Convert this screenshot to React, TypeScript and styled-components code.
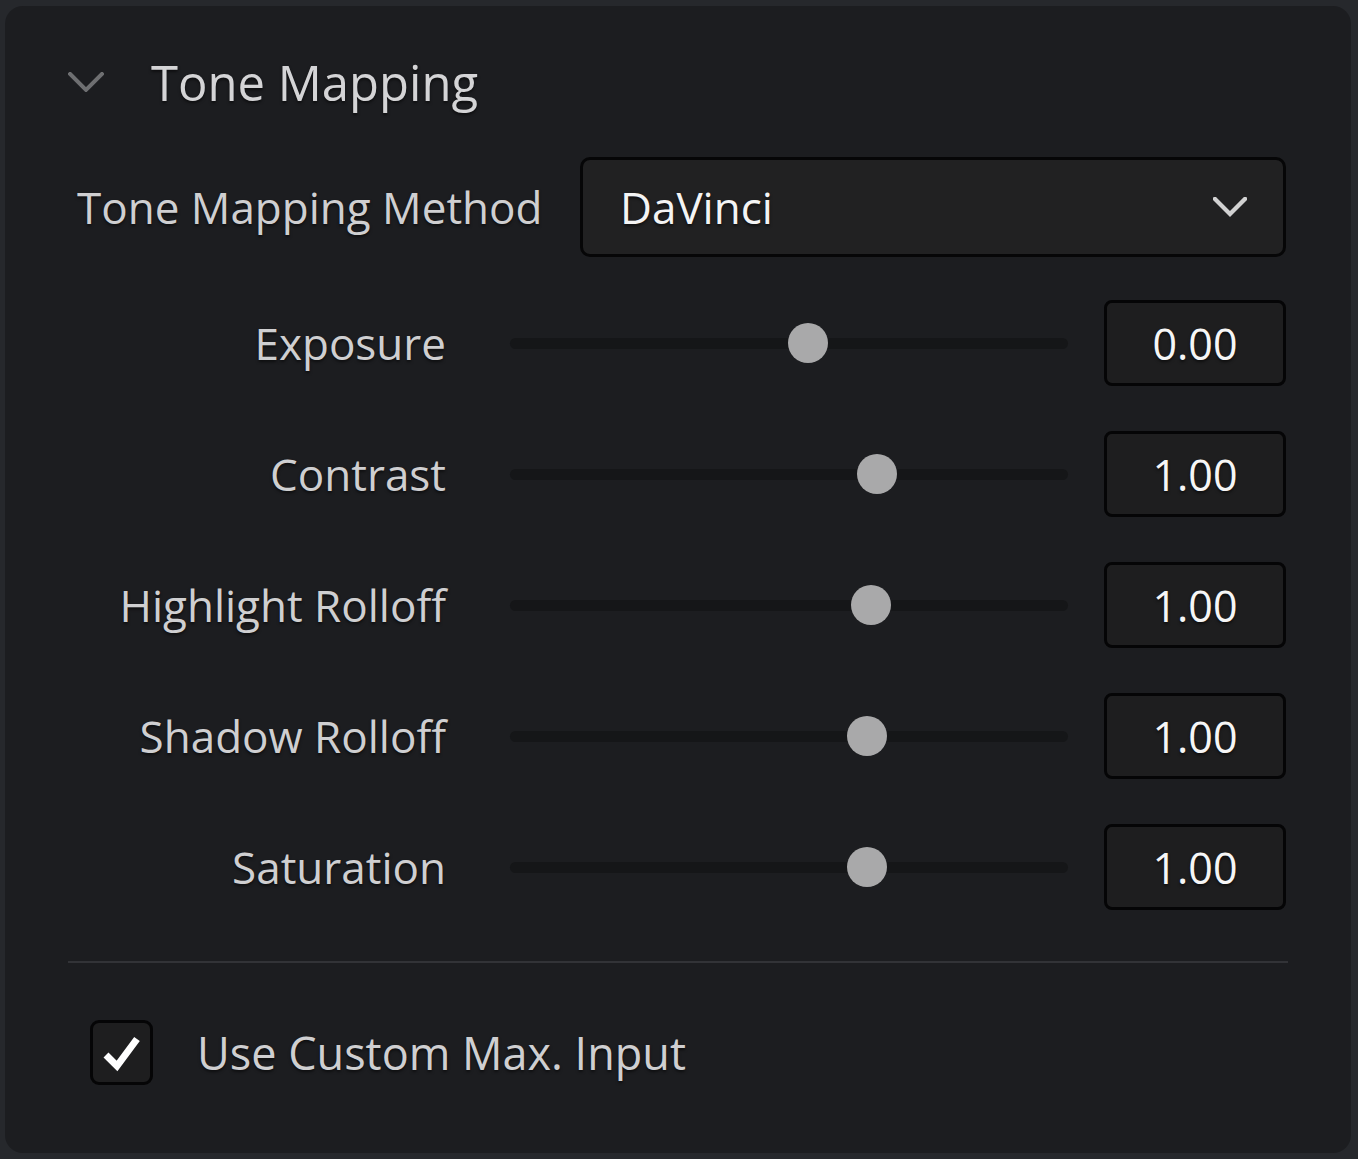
import styled, { createGlobalStyle } from 'styled-components';

const GlobalStyle = createGlobalStyle`
  html, body {
    margin: 0;
    padding: 0;
    background: #26282c;
  }
  body {
    font-family: 'Open Sans', 'Noto Sans', sans-serif;
  }
`;

const Panel = styled.div`
  box-sizing: border-box;
  width: 1346px;
  height: 1147px;
  margin: 6px 0 0 5px;
  padding: 44px 63px 0 63px;
  background: #1c1d20;
  border-radius: 18px;
  display: flex;
  flex-direction: column;
  text-shadow: 0 2px 3px rgba(0, 0, 0, 0.55);
`;

const Header = styled.div`
  height: 64px;
  display: flex;
  align-items: center;
  gap: 47px;
`;

const Title = styled.span`
  font-size: 49px;
  color: #d4d4d6;
`;

const MethodRow = styled.div`
  margin-top: 43px;
  height: 100px;
  display: flex;
  align-items: center;
  justify-content: space-between;
  padding-left: 9px;
  padding-right: 2px;
`;

const Label = styled.span`
  font-size: 44px;
  color: #cfcfd1;
  white-space: nowrap;
`;

const Select = styled.div`
  box-sizing: border-box;
  width: 706px;
  height: 100px;
  border: 3px solid #060607;
  border-radius: 10px;
  background: #212122;
  display: flex;
  align-items: center;
  justify-content: space-between;
  padding: 0 36px 0 37px;
  font-size: 44px;
  color: #f4f4f4;
`;

const SliderList = styled.div`
  margin-top: 43px;
  display: flex;
  flex-direction: column;
  gap: 45px;
`;

const SliderRow = styled.div`
  display: flex;
  align-items: center;
  height: 86px;
`;

const RowLabel = styled(Label)`
  width: 378px;
  text-align: right;
  flex-shrink: 0;
`;

const Track = styled.div`
  position: relative;
  flex-shrink: 0;
  width: 558px;
  height: 11px;
  margin: 0 36px 0 64px;
  border-radius: 6px;
  background: #151618;
`;

const Thumb = styled.div`
  position: absolute;
  top: 50%;
  width: 40px;
  height: 40px;
  margin: -20px 0 0 -20px;
  border-radius: 50%;
  background: #a9a9aa;
`;

const ValueBox = styled.div`
  box-sizing: border-box;
  flex-shrink: 0;
  width: 182px;
  height: 86px;
  border: 3px solid #050506;
  border-radius: 8px;
  background: #1e1e1f;
  display: flex;
  align-items: center;
  justify-content: center;
  font-size: 43px;
  color: #f6f6f6;
`;

const Divider = styled.div`
  margin-top: 51px;
  height: 2px;
  background: #323337;
`;

const CheckRow = styled.div`
  margin-top: 57px;
  display: flex;
  align-items: center;
  gap: 44px;
  padding-left: 22px;
`;

const CheckBox = styled.div`
  box-sizing: border-box;
  width: 63px;
  height: 65px;
  border: 3px solid #050506;
  border-radius: 9px;
  background: #1e1e1f;
  display: flex;
  align-items: center;
  justify-content: center;
`;

const CheckLabel = styled(Label)`
  font-size: 45px;
`;

const Chevron = ({ size, color, stroke }: { size: number; color: string; stroke: number }) => (
  <svg width={size} height={size * 0.58} viewBox="0 0 36 21" fill="none">
    <path d="M2 2 L18 18 L34 2" stroke={color} strokeWidth={stroke} strokeLinecap="square" />
  </svg>
);

const sliders = [
  { label: 'Exposure', value: '0.00', pos: 0.534 },
  { label: 'Contrast', value: '1.00', pos: 0.658 },
  { label: 'Highlight Rolloff', value: '1.00', pos: 0.647 },
  { label: 'Shadow Rolloff', value: '1.00', pos: 0.64 },
  { label: 'Saturation', value: '1.00', pos: 0.64 },
];

export default function App() {
  return (
    <>
      <GlobalStyle />
      <Panel>
        <Header>
          <Chevron size={36} color="#6e6f71" stroke={4} />
          <Title>Tone Mapping</Title>
        </Header>
        <MethodRow>
          <Label>Tone Mapping Method</Label>
          <Select>
            <span>DaVinci</span>
            <Chevron size={34} color="#d2d2d2" stroke={4.5} />
          </Select>
        </MethodRow>
        <SliderList>
          {sliders.map((s) => (
            <SliderRow key={s.label}>
              <RowLabel>{s.label}</RowLabel>
              <Track>
                <Thumb style={{ left: `${s.pos * 100}%` }} />
              </Track>
              <ValueBox>{s.value}</ValueBox>
            </SliderRow>
          ))}
        </SliderList>
        <Divider />
        <CheckRow>
          <CheckBox>
            <svg width="44" height="44" viewBox="0 0 44 44" fill="none">
              <path d="M6 24 L17 35 L37 8" stroke="#ffffff" strokeWidth="7" strokeLinejoin="miter" />
            </svg>
          </CheckBox>
          <CheckLabel>Use Custom Max. Input</CheckLabel>
        </CheckRow>
      </Panel>
    </>
  );
}
